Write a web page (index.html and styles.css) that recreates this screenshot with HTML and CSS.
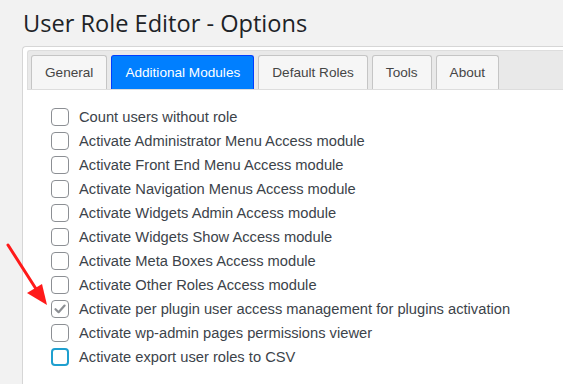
FILE: index.html
```html
<!DOCTYPE html>
<html lang="en">
<head>
    <meta charset="UTF-8">
    <title>User Role Editor - Options</title>
    <link rel="stylesheet" href="styles.css">
</head>
<body>
    <div class="wrap">
        <h1>User Role Editor - Options</h1>

        <div class="panel">
            <ul class="tabs">
                <li class="tab">General</li>
                <li class="tab active">Additional Modules</li>
                <li class="tab">Default Roles</li>
                <li class="tab">Tools</li>
                <li class="tab">About</li>
            </ul>

            <ul class="options">
                <li><span class="box"></span>Count users without role</li>
                <li><span class="box"></span>Activate Administrator Menu Access module</li>
                <li><span class="box"></span>Activate Front End Menu Access module</li>
                <li><span class="box"></span>Activate Navigation Menus Access module</li>
                <li><span class="box"></span>Activate Widgets Admin Access module</li>
                <li><span class="box"></span>Activate Widgets Show Access module</li>
                <li><span class="box"></span>Activate Meta Boxes Access module</li>
                <li><span class="box"></span>Activate Other Roles Access module</li>
                <li>
                    <span class="box checked">
                        <svg width="14" height="14" viewBox="0 0 14 14"><path d="M2.5 7.2 L5.6 10.2 L11.6 3.6" fill="none" stroke="#8c8f94" stroke-width="2.2" stroke-linecap="round" stroke-linejoin="round"/></svg>
                    </span>Activate per plugin user access management for plugins activation
                </li>
                <li><span class="box"></span>Activate wp-admin pages permissions viewer</li>
                <li><span class="box focus"></span>Activate export user roles to CSV</li>
            </ul>
        </div>
    </div>

    <!-- red pointer drawn over the page -->
    <svg class="arrow" width="60" height="80" viewBox="0 0 60 80">
        <line x1="8" y1="5" x2="38" y2="52" stroke="#ff1a1a" stroke-width="3" stroke-linecap="round"/>
        <polygon points="47,65 27,53 42,44" fill="#ff1a1a"/>
    </svg>
</body>
</html>
```

FILE: styles.css
```css
body {
    background-color: #f2f2f2;
    margin: 0;
    padding: 0;
    overflow: hidden;
    font-family: 'Liberation Sans', Arial, sans-serif;
    color: #333;
}
.wrap {
    padding-left: 22px;
}
h1 {
    font-family: 'Open Sans', 'Noto Sans', sans-serif;
    font-weight: 400;
    font-size: 23.6px;
    color: #1d2327;
    margin: 0;
    padding: 8px 0 0 1px;
    height: 38px;
    line-height: 30px;
}
.panel {
    background-color: white;
    border-top: 1px solid #d6d6d6;
    border-left: 1px solid #d6d6d6;
    border-radius: 4px 0 0 0;
    padding: 3px 0 0 4px;
    height: 334px;
}
.tabs {
    list-style: none;
    margin: 0;
    padding: 4px 0 0 3px;
    display: flex;
    gap: 4px;
    background-color: #e9e9e9;
    border-top: 1px solid #dddddd;
    border-left: 1px solid #dddddd;
    border-bottom: 1px solid #dddddd;
    border-radius: 3px 0 0 0;
    height: 34px;
}
.tab {
    font-size: 13.6px;
    background-color: #f6f6f6;
    border: 1px solid #c5c5c5;
    border-bottom: none;
    border-radius: 3px 3px 0 0;
    padding: 0 13px;
    line-height: 34px;
    color: #454545;
}
.tab.active {
    background-color: #007fff;
    border-color: #003eff;
    color: white;
}
.options {
    list-style: none;
    margin: 0;
    padding: 15px 0 0 24px;
}
.options li {
    display: flex;
    align-items: center;
    height: 24px;
    font-size: 14.7px;
    color: #3c434a;
}
.box {
    width: 16px;
    height: 16px;
    border: 1px solid #8c8f94;
    border-radius: 4px;
    margin-right: 10px;
    box-sizing: content-box;
    display: flex;
    align-items: center;
    justify-content: center;
    background-color: white;
}
.box.focus {
    width: 14px;
    height: 14px;
    border: 2px solid #1e9fcf;
}
.arrow {
    position: absolute;
    left: 0;
    top: 240px;
}
```
